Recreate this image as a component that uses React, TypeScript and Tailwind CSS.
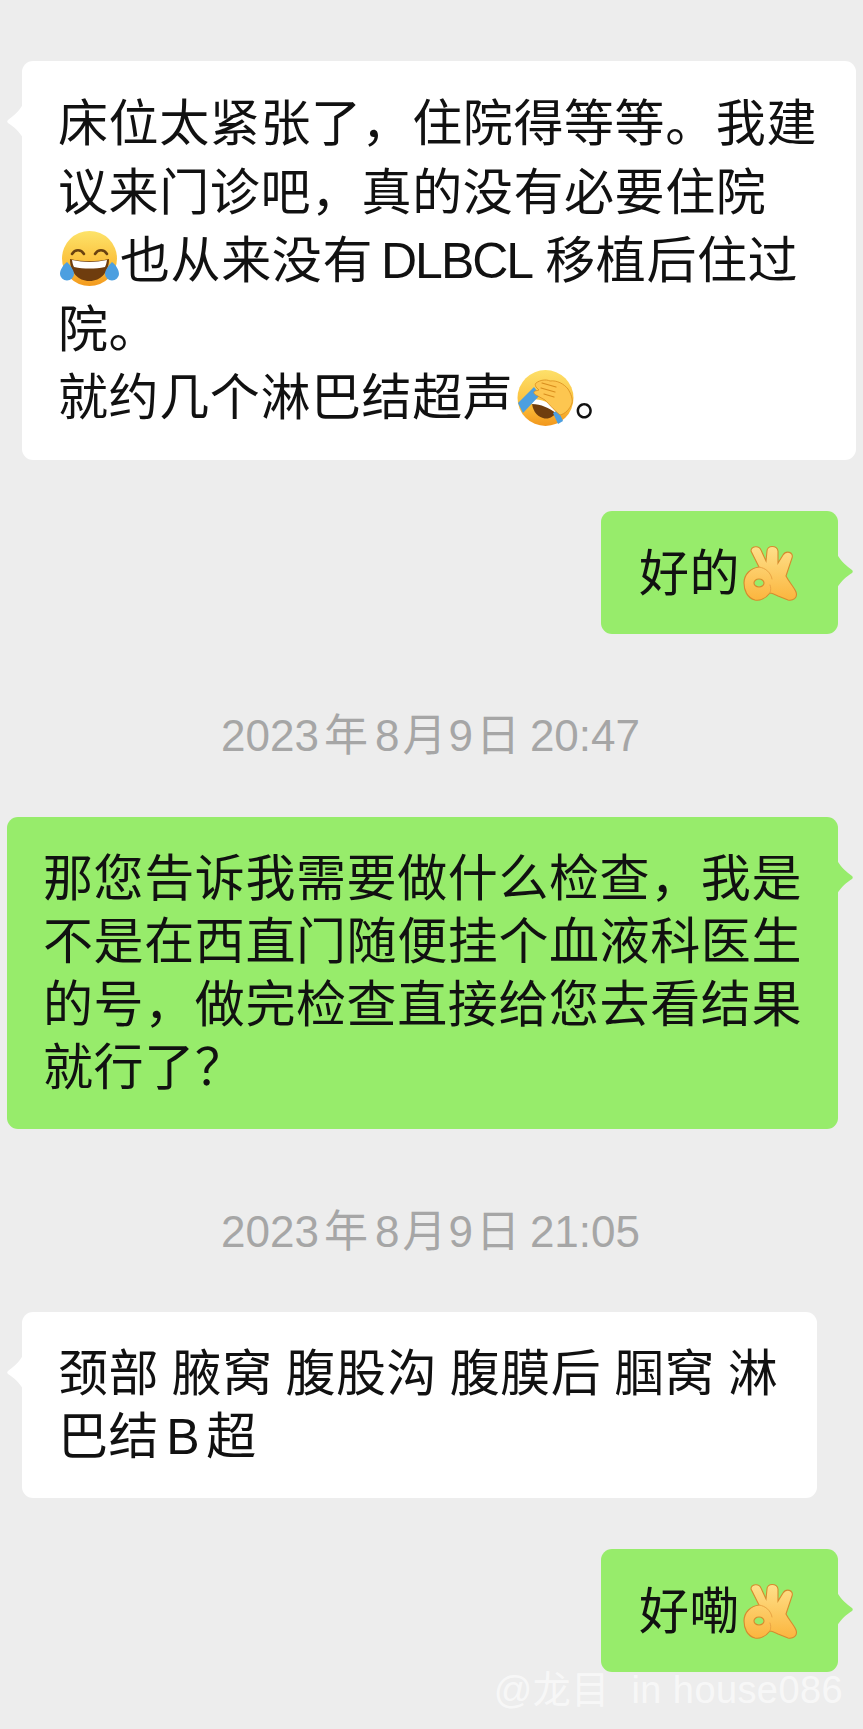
const cjk = "font-['Liberation_Sans','Noto_Sans_CJK_SC',sans-serif]";

function Laugh() {
  return (
    <svg viewBox="0 0 61 57" className="ml-[1px] inline-block w-[61px] h-[57px] align-[-8.5px]">
      <defs>
        <linearGradient id="lf" x1="0" y1="0" x2="0" y2="1">
          <stop offset="0" stopColor="#fde36a" />
          <stop offset="0.6" stopColor="#fbbf3a" />
          <stop offset="1" stopColor="#f39a1e" />
        </linearGradient>
      </defs>
      <circle cx="30.5" cy="28.5" r="27.5" fill="url(#lf)" />
      <path d="M13 24c3-5 9-5 12 0M36 24c3-5 9-5 12 0" fill="none" stroke="#6b4210" strokeWidth="2.6" strokeLinecap="round" />
      <path d="M11 29c13 3 26 3 39 0 0 13-8 22-19.500 22S11 42 11 29z" fill="#6f3d0e" />
      <path d="M13 30c12 2.500 23 2.500 35 0-.5 3-1 5-2 7-10 2-21 2-31 0-1-2-1.500-4-2-7z" fill="#fff" />
      <path d="M8 32c3 3 7 8 7 12a7 6.500 0 0 1-14 0c0-4 3-9 7-12zM53 32c-3 3-7 8-7 12a7 6.500 0 0 0 14 0c0-4-3-9-7-12z" fill="#4c9fe0" />
    </svg>
  );
}

function Facepalm() {
  return (
    <svg viewBox="0 0 57 56" className="ml-[4px] inline-block w-[57px] h-[56px] align-[-10.5px]">
      <defs>
        <linearGradient id="pf" x1="0" y1="0" x2="0" y2="1">
          <stop offset="0" stopColor="#fde06a" />
          <stop offset="0.65" stopColor="#fbbc38" />
          <stop offset="1" stopColor="#f2971d" />
        </linearGradient>
      </defs>
      <circle cx="28.500" cy="28" r="28" fill="url(#pf)" />
      <path d="M15 32c8-1 18 3 25 9-3 6-9 9-14 7-7-2-11-9-11-16z" fill="#6f3d0e" />
      <path d="M15 29c9 0 19 4 26 10l-2 4c-7-5-15-9-24-9z" fill="#fff" />
      <path d="M17 17 1 33l5 10 17-18zM36 43l5 11 5-3-5-11z" fill="#4c9fe0" />
      <path d="M19 13c4-3 10-4 14-2 7-1 14 3 18 8 3 5 5 10 4 14-2 6-7 11-12 12-7-6-11-11-15-15l-9-5c-2-1-3-3-1-4l4-1-3-3c-1-2-1-3 0-4z" fill="#fdc650" stroke="#d98e1e" strokeWidth="0.8" />
      <path d="M25 13l14 4M24 18l14 4M27 24l10 3" fill="none" stroke="#d98e1e" strokeWidth="1.200" strokeLinecap="round" />
    </svg>
  );
}

function OkHand() {
  return (
    <svg viewBox="-1 -1 55 58" className="ml-[3px] inline-block w-[55px] h-[58px] align-[-12px]">
      <defs>
        <linearGradient id="ok" x1="0" y1="0" x2="0" y2="1">
          <stop offset="0" stopColor="#fee08a" />
          <stop offset="1" stopColor="#fbb53e" />
        </linearGradient>
      </defs>
      <path
        fillRule="evenodd"
        d="M7 5C7 0 15-1 17 4L22 15 23 5C23-1 33-1 34 5L34 17 39 9C42 4 50 6 48 12L42 30C45 36 50 41 52 46 54 52 49 55 44 54L34 50C30 48 28 47 26 47 22 52 16 55 11 54 3 52 0 44 0 37 0 28 7 22 15 21L7 5zM15 33C12 33 10 35 10 37 10 39 12 41 15 41 18 41 20 39 20 37 20 35 18 33 15 33z"
        fill="url(#ok)"
        stroke="#d68a2e"
        strokeWidth="1.100"
      />
      <path d="M15 21c7 1 12 6 13 12M26 47c1-3 1-6 0-8" fill="none" stroke="#e9a443" strokeWidth="1" strokeLinecap="round" />
    </svg>
  );
}

function Bubble({ side, className, children }: { side: "left" | "right"; className: string; children: React.ReactNode }) {
  return (
    <div className={`relative rounded-[11px] text-[50px] tracking-[0.6px] text-[#111] ${side === "left" ? "bg-white" : "bg-[#97ec6b]"} ${className}`}>
      {side === "left" ? (
        <svg viewBox="0 0 16 34" className="absolute left-[-15px] top-[43px] w-4 h-[34px]">
          <path d="M16 0C12 8 6 12 1 16c-1 1-1 2 0 3 5 3 11 8 15 15z" fill="#fff" />
        </svg>
      ) : (
        <svg viewBox="0 0 16 34" className="absolute right-[-15px] top-[43px] w-4 h-[34px]">
          <path d="M0 0c4 8 10 12 15 16 1 1 1 2 0 3-5 3-11 8-15 15z" fill="#97ec6b" />
        </svg>
      )}
      {children}
    </div>
  );
}

function Stamp({ time, className }: { time: string; className: string }) {
  return (
    <div className={`pr-[2px] text-center text-[44px] leading-[50px] text-[#a6a6a6] ${className}`}>
      2023<span className="ml-[5px] mr-[7px]">年</span>8<span className="ml-[3px] mr-[2px]">月</span>9<span className="ml-[3px] mr-[10px]">日</span>{time}
    </div>
  );
}

export default function App() {
  return (
    <div className={`relative min-h-[1729px] overflow-hidden bg-[#ededed] pt-[61px] ${cjk}`}>
      <Bubble side="left" className="ml-[22px] mr-[7px] pl-9 pr-4 pt-[29px] pb-[27px] leading-[68.500px]">
        <div>床位太紧张了，住院得等等。我建</div>
        <div>议来门诊吧，真的没有必要住院</div>
        <div><Laugh />也从来没有<span className="ml-[8px] mr-[13px] tracking-[-2px]">DLBCL</span>移植后住过</div>
        <div>院。</div>
        <div>就约几个淋巴结超声<Facepalm />。</div>
      </Bubble>

      <div className="mt-[51px] flex justify-end pr-[25px]">
        <Bubble side="right" className="w-[237px] h-[123px] pl-[38px] leading-[126px] whitespace-nowrap">
          好的<OkHand />
        </Bubble>
      </div>

      <Stamp time="20:47" className="mt-[77px]" />

      <div className="mt-[56px] ml-[7px] mr-[25px]">
        <Bubble side="right" className="pl-9 pt-[31px] pb-[29px] leading-[63px]">
          <div>那您告诉我需要做什么检查，我是</div>
          <div>不是在西直门随便挂个血液科医生</div>
          <div>的号，做完检查直接给您去看结果</div>
          <div>就行了？</div>
        </Bubble>
      </div>

      <Stamp time="21:05" className="mt-[78px]" />

      <Bubble side="left" className="mt-[55px] ml-[22px] mr-[46px] h-[186px] pl-9 pt-[31px] leading-[63.500px]">
        <div className="[word-spacing:-2px]">颈部 腋窝 腹股沟 腹膜后 腘窝 淋</div>
        <div>巴结<span className="ml-[7px] mr-[6px]">B</span>超</div>
      </Bubble>

      <div className="mt-[51px] flex justify-end pr-[25px]">
        <Bubble side="right" className="w-[237px] h-[123px] pl-[38px] leading-[126px] whitespace-nowrap">
          好嘞<OkHand />
        </Bubble>
      </div>

      <div className="absolute right-[20px] top-[1665px] whitespace-pre text-[38px] leading-[50px] text-white/60 tracking-[0.4px]">
        @龙目  in house086
      </div>
    </div>
  );
}
